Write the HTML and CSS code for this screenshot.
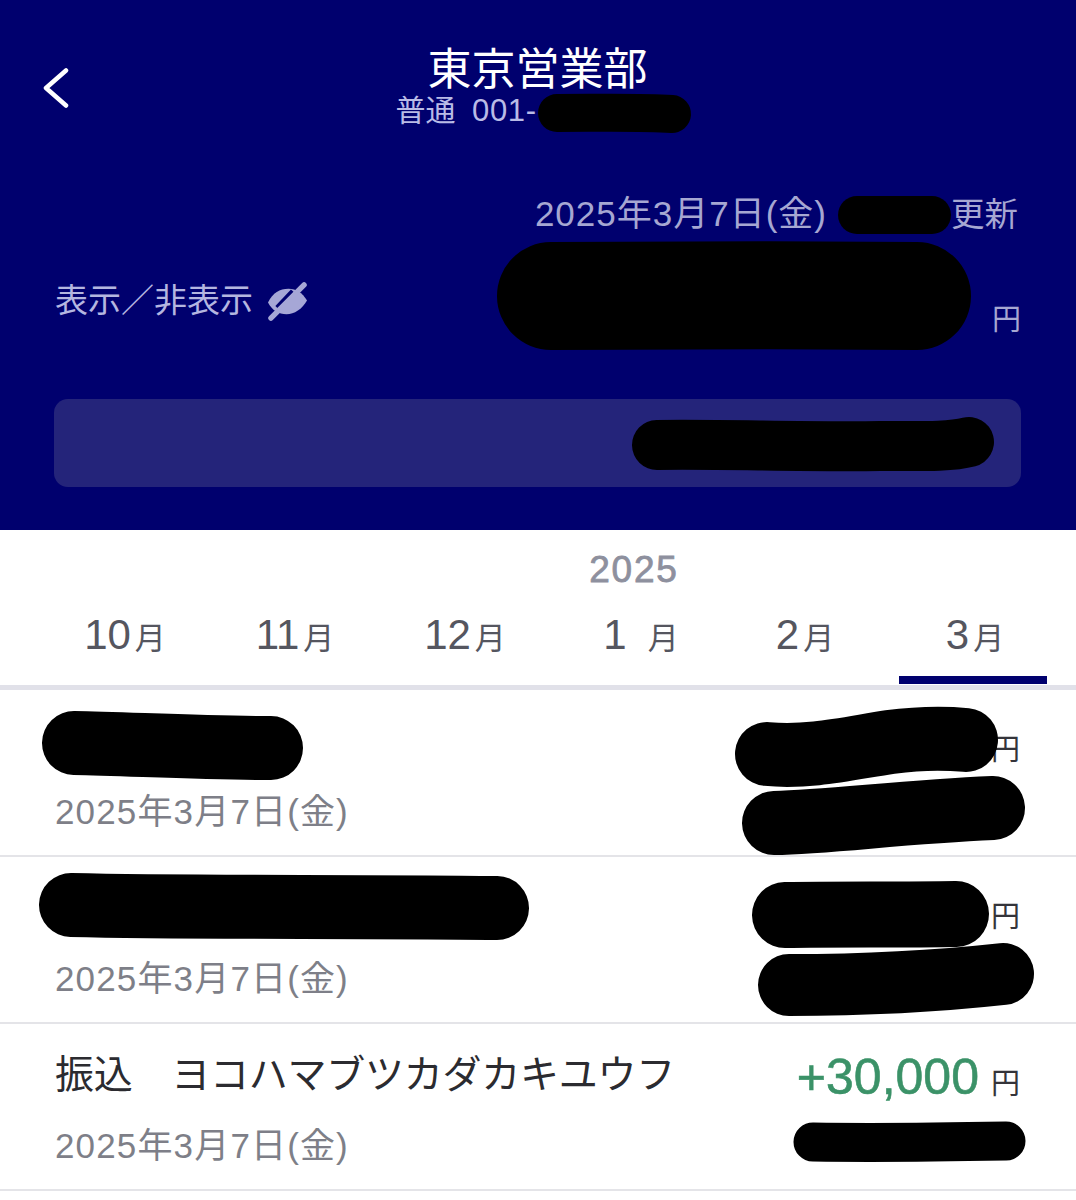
FILE: index.html
```html
<!DOCTYPE html>
<html lang="ja">
<head>
<meta charset="utf-8">
<title>東京営業部</title>
<link rel="stylesheet" href="styles.css">
</head>
<body>
<div class="page">
  <header class="hero">
    <div class="nav">
      <svg class="back" viewBox="0 0 28 40" aria-hidden="true"><path d="M24 3 L4 20.5 L24 38" transform="translate(0 -.5)"/></svg>
      <div class="heading">
        <h1 class="title">東京営業部</h1>
        <p class="account">普通&nbsp;&nbsp;<span class="account-no">001-</span><span class="account-gap"></span></p>
      </div>
    </div>
    <p class="updated"><span class="stamp">2025年3月7日(金)</span><span class="time-gap"></span>更新</p>
    <div class="balance-row">
      <div class="toggle">
        <span>表示／非表示</span>
        <svg class="eye" viewBox="0 0 40 40" aria-hidden="true">
          <path class="eye-shape" d="M0 21 C5 11 12 7 21 7 C29 7 35 11 40 19 C35 28 27 33 19 33 C11 33 4 29 0 21Z"/>
          <path class="eye-gap" d="M9 26 L25 9"/>
          <path class="eye-slash" d="M3 37 L37 3"/>
        </svg>
      </div>
      <span class="unit unit-light">円</span>
    </div>
    <div class="available"></div>
  </header>

  <section class="months">
    <div class="year">2025</div>
    <div class="tab"><b>10</b>月</div>
    <div class="tab"><b>11</b>月</div>
    <div class="tab"><b>12</b>月</div>
    <div class="tab tab-spaced"><b>1</b>月</div>
    <div class="tab"><b>2</b>月</div>
    <div class="tab tab-active"><b>3</b>月</div>
  </section>

  <main class="list">
    <article class="row">
      <div class="name"></div>
      <div class="amount"><span class="unit">円</span></div>
      <div class="date">2025年3月7日(金)</div>
    </article>
    <article class="row">
      <div class="name"></div>
      <div class="amount"><span class="unit">円</span></div>
      <div class="date">2025年3月7日(金)</div>
    </article>
    <article class="row">
      <div class="name">振込　ヨコハマブツカダカキユウフ</div>
      <div class="amount"><span class="plus">+30,000</span><span class="unit">円</span></div>
      <div class="date">2025年3月7日(金)</div>
    </article>
  </main>

  <svg class="redactions" viewBox="0 0 1076 1200" aria-hidden="true">
    <path style="stroke-width:38" d="M557 113 C600 113 640 112 672 114"/>
    <path style="stroke-width:38" d="M857 215 L932 215"/>
    <path style="stroke-width:108" d="M551 296 C650 295 800 295 917 296"/>
    <path style="stroke-width:50" d="M657 445 C720 444 800 447 880 446 C920 446 950 447 969 442"/>
    <path style="stroke-width:64" d="M74 743 C130 744 200 748 271 748"/>
    <path style="stroke-width:64" d="M767 754 C810 758 850 748 890 742 C920 738 945 738 966 740"/>
    <path style="stroke-width:64" d="M774 823 C830 822 900 812 993 808"/>
    <path style="stroke-width:64" d="M71 905 C200 908 350 906 497 908"/>
    <path style="stroke-width:66" d="M785 915 C840 914 900 915 956 914"/>
    <path style="stroke-width:62" d="M789 985 C850 985 930 982 1003 974"/>
    <path style="stroke-width:39" d="M813 1142 C880 1143 950 1142 1006 1141"/>
  </svg>
</div>
</body>
</html>
```
FILE: styles.css
```css
* { box-sizing: border-box; }
html, body { margin: 0; padding: 0; background: #fff; }
body { font-family: "Liberation Sans", "Noto Sans CJK JP", sans-serif; }
.page { position: relative; width: 1076px; height: 1200px; overflow: hidden; }

.hero { height: 530px; background: #00006e; padding: 44px 55px 0 54px; display: flex; flex-direction: column; }
.nav { position: relative; height: 84px; }
.back { position: absolute; left: -12px; top: 24px; width: 28px; height: 40px; fill: none; stroke: #fff; stroke-width: 4.5; stroke-linecap: round; stroke-linejoin: round; }
.heading { text-align: center; }
.title { margin: 0; padding-top: 2px; font-size: 44px; line-height: 48px; font-weight: 400; color: #fff; }
.account { margin: 0; font-size: 30px; line-height: 34px; color: #b9bbe6; }
.account-no { font-size: 31px; letter-spacing: .6px; }
.account-gap { display: inline-block; width: 143px; }

.updated { margin: 68px 3px 0 0; text-align: right; font-size: 33.5px; line-height: 36px; color: #a6a7d2; }
.stamp { font-size: 35px; letter-spacing: 1px; }
.time-gap { display: inline-block; width: 124px; }

.balance-row { display: flex; justify-content: space-between; align-items: flex-start; height: 166px; padding-left: 1px; }
.toggle { display: flex; align-items: center; gap: 15px; margin-top: 48px; font-size: 33px; line-height: 40px; color: #b4b6e0; }
.eye { width: 39px; height: 39px; }
.eye-shape { fill: #a6a7d6; }
.eye-gap { fill: none; stroke: #00006e; stroke-width: 4; }
.eye-slash { fill: none; stroke: #a6a7d6; stroke-width: 5.5; stroke-linecap: round; }
.unit { font-size: 29px; line-height: 34px; }
.unit-light { margin-top: 70px; color: #a6a7d2; }

.available { height: 88px; border-radius: 14px; background: #24247a; }

.months { display: grid; grid-template-columns: repeat(6, 170px); grid-template-rows: 80px 75px; margin-left: 38px; height: 155px; }
.year { grid-column: 4; grid-row: 1; align-self: start; padding: 20px 0 0 2px; text-align: center; font-size: 37px; line-height: 40px; letter-spacing: 1.8px; color: #8e909e; -webkit-text-stroke: .8px #8e909e; }
.tab { grid-row: 2; display: flex; justify-content: center; align-items: baseline; gap: 4px; padding-left: 4px; font-size: 31px; color: #55565f; margin: 0 11px; height: 74px; }
.tab b { font-size: 42px; font-weight: 400; line-height: 50px; }
.tab-spaced { gap: 21px; transform: translateX(6px); }
.tab-active { border-bottom: 8px solid #00006e; }

.list { border-top: 5px solid #e1e1e9; }
.row { display: grid; grid-template-columns: 1fr auto; grid-template-rows: 102px 63px; height: 167px; padding: 0 56px 0 55px; border-bottom: 2px solid #e4e4e8; }
.name { align-self: center; font-size: 39px; letter-spacing: -.25px; line-height: 50px; color: #2b2b30; white-space: nowrap; }
.amount { align-self: end; display: flex; align-items: baseline; justify-content: flex-end; gap: 12px; padding-bottom: 15px; }
.plus { font-size: 50px; line-height: 54px; color: #3b9268; -webkit-text-stroke: .6px #3b9268; }
.row .unit { color: #34343a; line-height: 54px; }
.date { grid-column: 1; font-size: 35px; letter-spacing: 1.15px; line-height: 40px; color: #7e7f88; }

.redactions { position: absolute; left: 0; top: 0; width: 1076px; height: 1200px; pointer-events: none; }
.redactions path { fill: none; stroke: #000; stroke-linecap: round; stroke-linejoin: round; }
```
